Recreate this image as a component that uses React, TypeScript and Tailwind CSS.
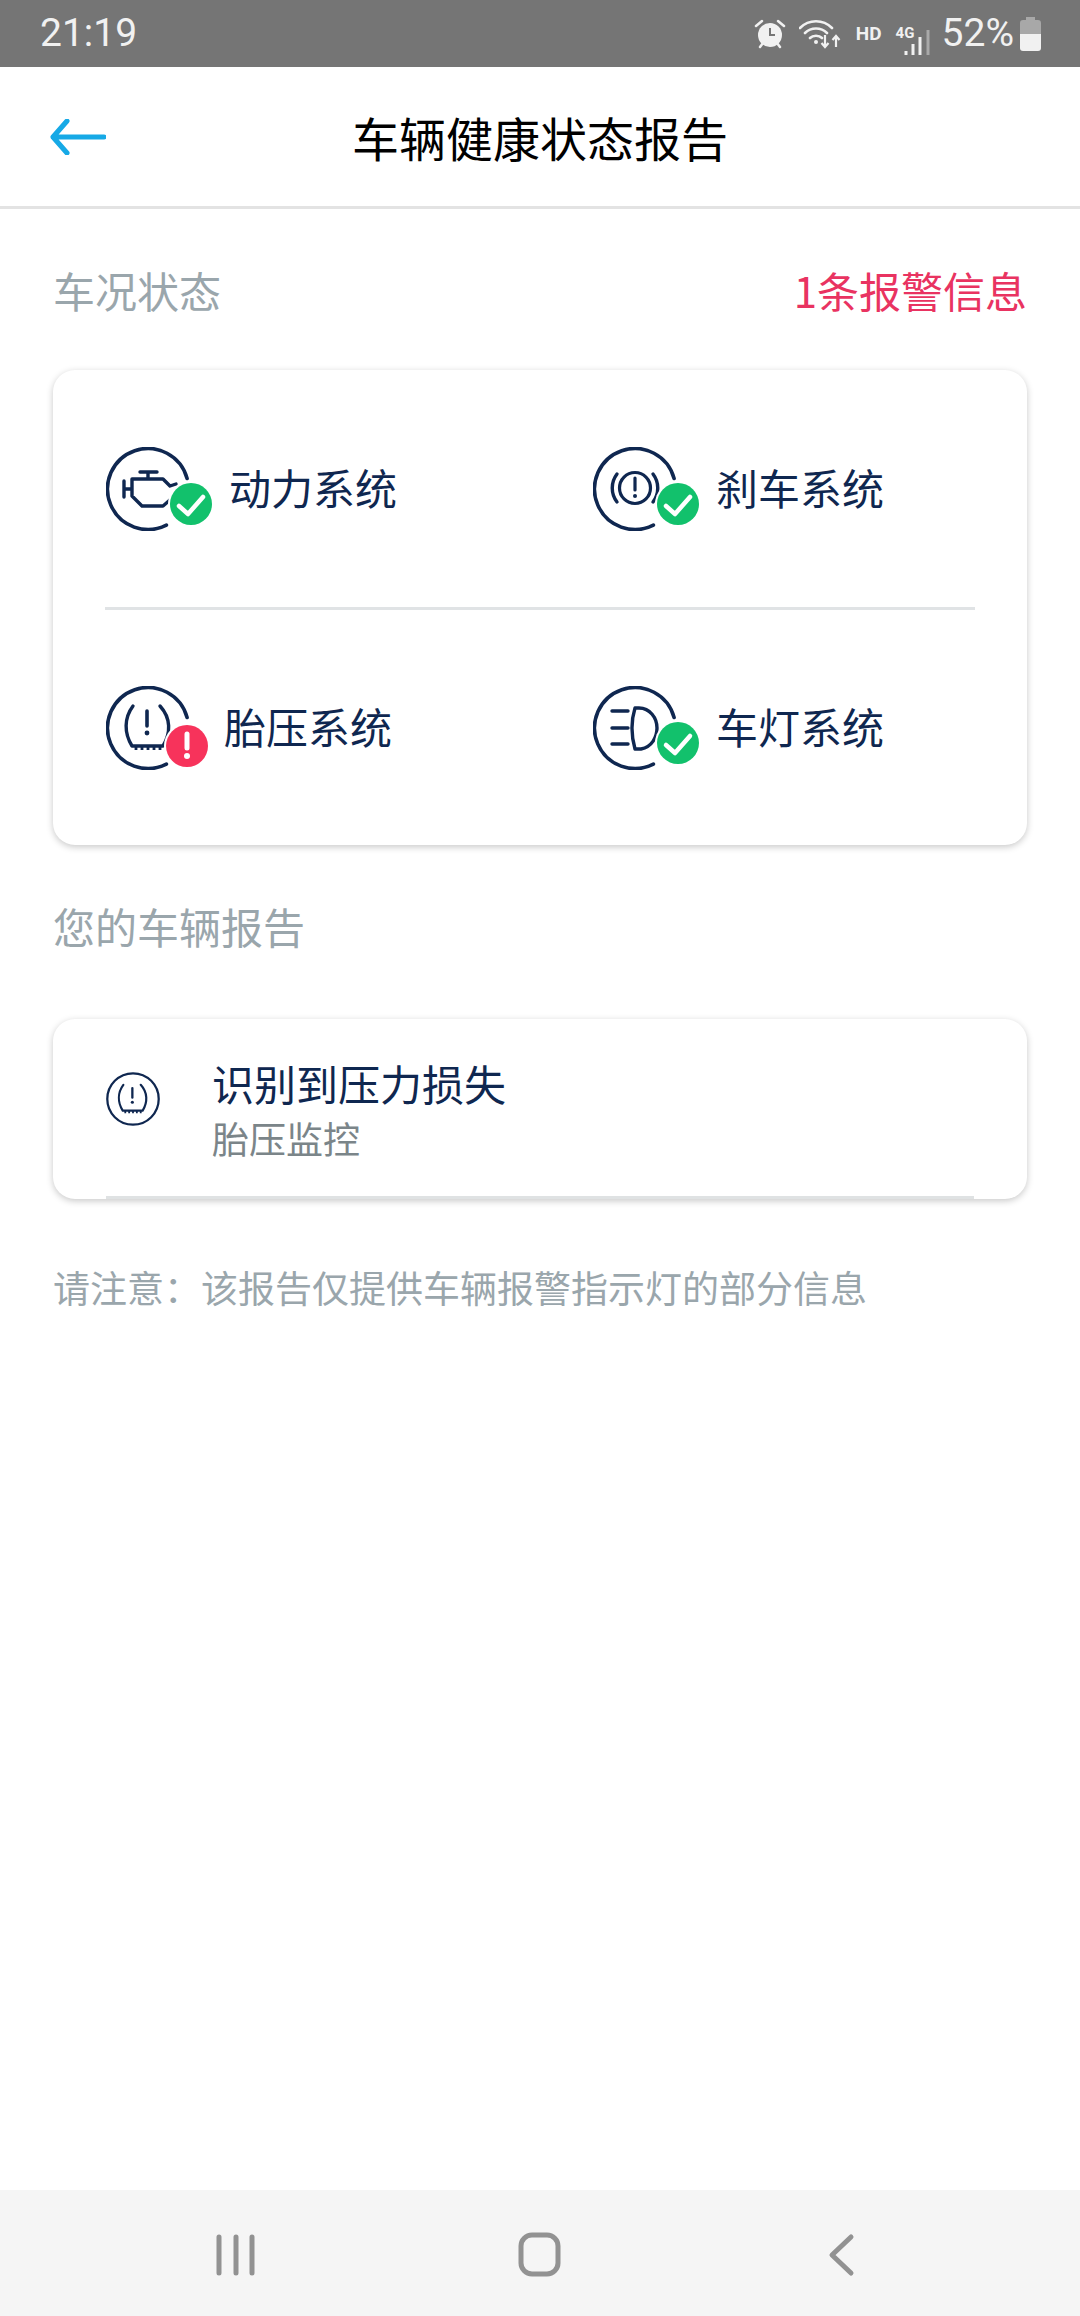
const NAVY = '#0f2750'

function Ring() {
  return <path d="M81.1 31.5A40.5 40.5 0 1 0 60.4 78.1" fill="none" stroke={NAVY} strokeWidth="3.6" strokeLinecap="round" />
}

function CheckBadge({ cx, cy }: { cx: number; cy: number }) {
  return (
    <>
      <circle cx={cx} cy={cy} r="23" fill="#fff" />
      <circle cx={cx} cy={cy} r="21" fill="#12c16c" />
      <path
        d={`M${cx - 12} ${cy + 2}l9 8 15-17`}
        fill="none"
        stroke="#fff"
        strokeWidth="4.5"
        strokeLinecap="round"
        strokeLinejoin="round"
      />
    </>
  )
}

function EngineIcon() {
  return (
    <svg width="110" height="84" viewBox="0 0 110 84" fill="none">
      <Ring />
      <path
        d="M34 25h17M42 25v7M18 34v16M18 42h8M26 32h31l7 7 6-2M26 32v17l10 10h21l8-7"
        stroke={NAVY}
        strokeWidth="3.4"
        strokeLinecap="round"
        strokeLinejoin="round"
      />
      <CheckBadge cx={85} cy={57} />
    </svg>
  )
}

function BrakeIcon() {
  return (
    <svg width="110" height="84" viewBox="0 0 110 84" fill="none">
      <Ring />
      <circle cx="42" cy="41" r="15.5" stroke={NAVY} strokeWidth="3.2" />
      <path d="M24 27a23 23 0 0 0 0 28M60 27a23 23 0 0 1 0 28" stroke={NAVY} strokeWidth="3.4" strokeLinecap="round" />
      <path d="M42 31v12" stroke={NAVY} strokeWidth="3.2" strokeLinecap="round" />
      <circle cx="42" cy="49" r="2" fill={NAVY} />
      <CheckBadge cx={85} cy={57} />
    </svg>
  )
}

function TireGlyph() {
  return (
    <>
      <path
        d="M27 20c-9 12-9 27-1 40h31c8-13 8-28 -3-40"
        stroke={NAVY}
        strokeWidth="3.4"
        strokeLinecap="round"
        strokeLinejoin="round"
        fill="none"
      />
      <path d="M30 60v4M36 60v4M42 60v4M48 60v4M54 60v4" stroke={NAVY} strokeWidth="2.8" />
      <path d="M41 25v15" stroke={NAVY} strokeWidth="3.6" strokeLinecap="round" />
      <circle cx="41" cy="47" r="2.4" fill={NAVY} />
    </>
  )
}

function TireIcon() {
  return (
    <svg width="110" height="84" viewBox="0 0 110 84" fill="none">
      <Ring />
      <TireGlyph />
      <circle cx="81" cy="60" r="23" fill="#fff" />
      <circle cx="81" cy="60" r="21" fill="#f7335b" />
      <path d="M81 48v14" stroke="#fff" strokeWidth="5" strokeLinecap="round" />
      <circle cx="81" cy="70" r="3" fill="#fff" />
    </svg>
  )
}

function LampIcon() {
  return (
    <svg width="110" height="84" viewBox="0 0 110 84" fill="none">
      <Ring />
      <path
        d="M19 25h16M19 42h16M19 58h16M42 22c-4 13-4 27 0 41h6c11-2 16-12 16-21 0-10-7-20-18-20z"
        stroke={NAVY}
        strokeWidth="3.4"
        strokeLinecap="round"
        strokeLinejoin="round"
      />
      <CheckBadge cx={85} cy={57} />
    </svg>
  )
}

function StatusIcons() {
  return (
    <div className="flex items-center">
      <svg width="32" height="32" viewBox="0 0 32 32" className="mr-[13px]">
        <circle cx="16" cy="17" r="12" fill="#f1f1f1" />
        <path d="M16 10v7h5" fill="none" stroke="#757575" strokeWidth="2" />
        <path d="M2 8l6-5M30 8l-6-5M6 29l3-4M26 29l-3-4" stroke="#f1f1f1" strokeWidth="2.5" strokeLinecap="round" />
      </svg>
      <svg width="42" height="32" viewBox="0 0 42 32" className="mr-[15px]">
        <path d="M1 10c9-9 23-9 32 0M6 15c6-6 16-6 22 0M11 20c3-3 9-3 12 0" fill="none" stroke="#f1f1f1" strokeWidth="2.6" strokeLinecap="round" />
        <circle cx="17" cy="24" r="2" fill="#f1f1f1" />
        <path d="M26 17v12M22.5 25l3.5 4 3.5-4M37 29V18M33.5 22l3.5-4 3.5 4" fill="none" stroke="#f1f1f1" strokeWidth="2.2" />
      </svg>
      <span className="mr-[14px] text-[19px] font-bold leading-none text-[#f1f1f1]">HD</span>
      <div className="relative mr-[10px] h-[42px] w-[36px]">
        <span className="absolute left-0 top-[13px] text-[15px] font-bold leading-none text-[#f1f1f1]">4G</span>
        <svg width="36" height="42" viewBox="0 0 36 42" className="absolute left-0 top-0">
          <path d="M10 38v5M17 31v12M24 24v19" stroke="#f1f1f1" strokeWidth="3" />
          <path d="M32 17v26" stroke="#a9a9a9" strokeWidth="3" />
        </svg>
      </div>
      <span className="mr-[6px] text-[39px] font-normal leading-none text-[#f1f1f1]">52%</span>
      <svg width="21" height="34" viewBox="0 0 21 34">
        <path d="M6 0h9v3h3a3 3 0 0 1 3 3v12H0V6a3 3 0 0 1 3-3h3z" fill="#a8a8a8" />
        <path d="M0 17h21v14a3 3 0 0 1-3 3H3a3 3 0 0 1-3-3z" fill="#f1f1f1" />
      </svg>
    </div>
  )
}

export default function App() {
  return (
    <div className="flex h-[2316px] w-[1080px] flex-col bg-white font-['Noto_Sans_CJK_SC','Noto_Sans',sans-serif]">
      <div className="flex h-[67px] items-center justify-between bg-[#757575] pl-[40px] pr-[39px] font-['Roboto',sans-serif]">
        <span className="text-[39px] font-normal leading-none text-[#f1f1f1]">21:19</span>
        <StatusIcons />
      </div>

      <header className="grid h-[142px] grid-cols-[1fr_auto_1fr] items-center border-b-[3px] border-[#e3e3e3] px-[50px]">
        <svg width="56" height="36" viewBox="0 0 56 36" fill="none">
          <path d="M54 18H3M17 2L3 18l14 16" stroke="#16a9e6" strokeWidth="5" strokeLinecap="round" strokeLinejoin="round" />
        </svg>
        <h1 className="text-[47px] font-normal leading-none text-black">车辆健康状态报告</h1>
        <div />
      </header>

      <div className="flex items-center justify-between pl-[53px] pr-[53px] pt-[56px]">
        <span className="text-[42px] leading-[50px] text-[#9aa6ac]">车况状态</span>
        <span className="text-[42px] leading-[50px] text-[#e93361]">1条报警信息</span>
      </div>

      <section className="mx-[53px] mt-[55px] h-[475px] rounded-[22px] bg-white shadow-[0_2px_7px_rgba(0,0,0,0.22)]">
        <div className="grid h-[237px] grid-cols-2 items-center">
          <div className="flex items-center pl-[53px]">
            <EngineIcon />
            <span className="mb-[3px] ml-[13px] text-[42px] leading-none" style={{ color: NAVY }}>动力系统</span>
          </div>
          <div className="flex items-center pl-[53px]">
            <BrakeIcon />
            <span className="mb-[3px] ml-[13px] text-[42px] leading-none" style={{ color: NAVY }}>刹车系统</span>
          </div>
        </div>
        <div className="mx-[52px] h-[3px] bg-[#e0e3e5]" />
        <div className="grid h-[235px] grid-cols-2 items-center">
          <div className="flex items-center pl-[53px]">
            <TireIcon />
            <span className="mb-[3px] ml-[8px] text-[42px] leading-none" style={{ color: NAVY }}>胎压系统</span>
          </div>
          <div className="flex items-center pl-[53px]">
            <LampIcon />
            <span className="mb-[3px] ml-[13px] text-[42px] leading-none" style={{ color: NAVY }}>车灯系统</span>
          </div>
        </div>
      </section>

      <div className="pl-[53px] pt-[56px] text-[42px] leading-[50px] text-[#9aa6ac]">您的车辆报告</div>

      <section className="mx-[53px] mt-[68px] h-[180px] rounded-[22px] bg-white shadow-[0_2px_7px_rgba(0,0,0,0.22)]">
        <div className="mx-[53px] flex h-[180px] items-start border-b-[3px] border-[#dfe2e3]">
          <svg width="54" height="54" viewBox="0 0 84 84" fill="none" className="mt-[53px]">
            <circle cx="42" cy="42" r="40" stroke={NAVY} strokeWidth="3.5" />
            <TireGlyph />
          </svg>
          <div className="ml-[52px] pt-[39px]">
            <div className="text-[42px] leading-[50px]" style={{ color: NAVY }}>识别到压力损失</div>
            <div className="mt-[7px] text-[37px] leading-[46px] text-[#7b8589]">胎压监控</div>
          </div>
        </div>
      </section>

      <p className="pl-[53px] pt-[65px] text-[37px] leading-[46px] text-[#9aa6ac]">请注意：该报告仅提供车辆报警指示灯的部分信息</p>

      <div className="flex-1" />

      <nav className="h-[126px] bg-[#f5f5f5]">
        <svg width="1080" height="126" viewBox="0 0 1080 126" fill="none">
          <path d="M219 47v36M236 47v36M252 47v36" stroke="#929292" strokeWidth="5" strokeLinecap="round" />
          <rect x="521" y="45" width="37" height="39" rx="11" stroke="#929292" strokeWidth="5" />
          <path d="M850 47l-19 18 19 18" stroke="#929292" strokeWidth="5" strokeLinecap="round" strokeLinejoin="round" transform="translate(1 0)" />
        </svg>
      </nav>
    </div>
  )
}
